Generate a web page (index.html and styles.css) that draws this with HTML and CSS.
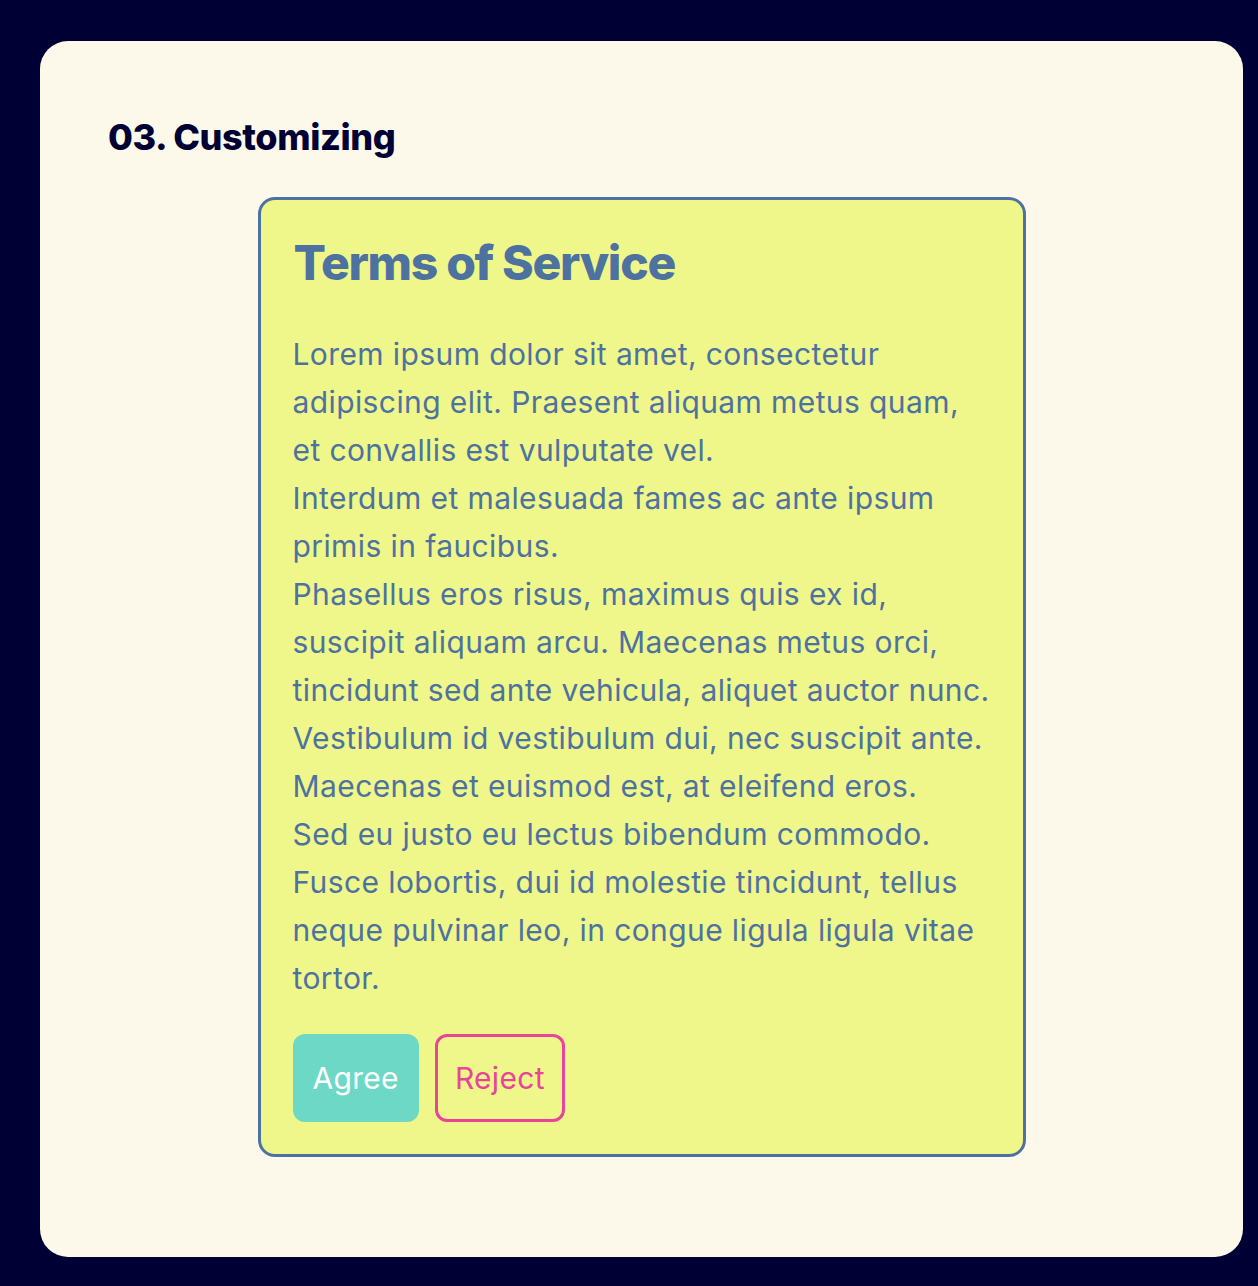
FILE: index.html
```html
<!DOCTYPE html>
<html lang="en">
<head>
<meta charset="utf-8">
<title>03. Customizing</title>
<link rel="stylesheet" href="styles.css">
</head>
<body>
<main class="panel">
  <h2 class="section-title">03. Customizing</h2>
  <section class="tos">
    <h1 class="tos-title">Terms of Service</h1>
    <p class="tos-text">Lorem ipsum dolor sit amet, consectetur adipiscing elit. Praesent aliquam metus quam, et convallis est vulputate vel.<br>Interdum et malesuada fames ac ante ipsum primis in faucibus.<br>Phasellus eros risus, maximus quis ex id, suscipit aliquam arcu. Maecenas metus orci, tincidunt sed ante vehicula, aliquet auctor nunc. Vestibulum id vestibulum dui, nec suscipit ante. Maecenas et euismod est, at eleifend eros.<br>Sed eu justo eu lectus bibendum commodo. Fusce lobortis, dui id molestie tincidunt, tellus neque pulvinar leo, in congue ligula ligula vitae tortor.</p>
    <div class="tos-actions">
      <button class="btn btn-agree" type="button">Agree</button>
      <button class="btn btn-reject" type="button">Reject</button>
    </div>
  </section>
</main>
</body>
</html>
```

FILE: styles.css
```css
html, body {
  margin: 0;
  padding: 0;
  background: #000035;
}

body {
  padding: 41px 15px 30px 40px;
  font-family: Inter, "Noto Sans", sans-serif;
}

.panel {
  background: #fcf9ea;
  border-radius: 28px;
  padding: 70px 68px 100px;
  display: flex;
  flex-direction: column;
  align-items: center;
}

.section-title {
  align-self: stretch;
  margin: 0 0 34px;
  font-size: 36px;
  line-height: 52px;
  font-weight: 800;
  letter-spacing: -0.4px;
  color: #000035;
}

.tos {
  width: 768px;
  box-sizing: border-box;
  background: #eff78b;
  border: 3px solid #4e72a0;
  border-radius: 17px;
  padding: 32px;
  color: #4e72a0;
}

.tos-title {
  margin: 0 0 38px;
  padding-top: 2px;
  padding-left: 1px;
  font-size: 48px;
  line-height: 58px;
  font-weight: 800;
  letter-spacing: -1.3px;
}

.tos-text {
  margin: 0;
  font-size: 30px;
  line-height: 48px;
  letter-spacing: 0.4px;
}

.tos-actions {
  display: flex;
  gap: 16px;
  margin-top: 32px;
}

.btn {
  font-family: inherit;
  font-size: 30px;
  line-height: 48px;
  letter-spacing: 0.3px;
  border-radius: 12px;
  cursor: pointer;
}

.btn-agree {
  background: #6dd8c5;
  color: #ffffff;
  border: 0;
  padding: 20px;
}

.btn-reject {
  background: transparent;
  color: #e8449a;
  border: 3px solid #e8449a;
  padding: 17px;
}
```
